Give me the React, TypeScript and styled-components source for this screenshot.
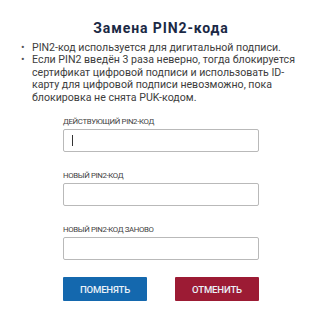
import React from "react";
import styled, { createGlobalStyle } from "styled-components";

const Global = createGlobalStyle`
  html, body { margin: 0; padding: 0; background: #ffffff; }
  body { font-family: Roboto, "Liberation Sans", Arial, sans-serif; }
`;

const Page = styled.div`
  width: 322px;
  height: 320px;
  box-sizing: border-box;
  padding-top: 20px;
  display: flex;
  flex-direction: column;
`;

const Title = styled.h1`
  margin: 0;
  text-align: center;
  font-family: Roboto, "Liberation Sans", sans-serif;
  font-weight: 700;
  font-size: 14px;
  line-height: 16px;
  letter-spacing: 0.9px;
  color: #1b2945;
`;

const List = styled.ul`
  margin: 6px 0 0 0;
  padding: 0 20px 0 32px;
  list-style: none;
`;

const Item = styled.li`
  position: relative;
  font-size: 10.6px;
  line-height: 12.4px;
  color: #3d3d3d;
  &::before {
    content: "•";
    position: absolute;
    left: -11px;
    top: 0;
    color: #555;
  }
`;

const Form = styled.div`
  margin: 13px 0 0 63px;
  width: 196px;
  display: flex;
  flex-direction: column;
  gap: 19px;
`;

const Field = styled.div`
  display: flex;
  flex-direction: column;
  gap: 3px;
`;

const Label = styled.div`
  font-size: 7.8px;
  line-height: 9px;
  letter-spacing: -0.35px;
  text-transform: uppercase;
  color: #3f3f3f;
`;

const Box = styled.div`
  height: 23px;
  box-sizing: border-box;
  border: 1px solid #b9b9b9;
  border-radius: 2px;
  display: flex;
  align-items: center;
  padding-left: 8px;
`;

const Caret = styled.span`
  width: 1px;
  height: 11px;
  background: #333;
`;

const Buttons = styled.div`
  display: flex;
  justify-content: space-between;
  margin-top: -2px;
`;

const Button = styled.button<{ $tone: "blue" | "red" }>`
  width: 84px;
  height: 24px;
  border: none;
  border-radius: 1px;
  padding: 0;
  font-family: Roboto, "Liberation Sans", sans-serif;
  font-size: 9.6px;
  font-weight: 500;
  letter-spacing: -0.2px;
  color: #eaf1f8;
  background: ${(p) => (p.$tone === "blue" ? "#1468ae" : "#9c1b34")};
`;

export default function App() {
  return (
    <>
      <Global />
      <Page>
        <Title>Замена PIN2-кода</Title>
        <List>
          <Item>PIN2-код используется для дигитальной подписи.</Item>
          <Item>
            Если PIN2 введён 3 раза неверно, тогда блокируется сертификат
            цифровой подписи и использовать ID-карту для цифровой подписи
            невозможно, пока блокировка не снята PUK-кодом.
          </Item>
        </List>
        <Form>
          <Field>
            <Label>Действующий PIN2-код</Label>
            <Box>
              <Caret />
            </Box>
          </Field>
          <Field>
            <Label>Новый PIN2-код</Label>
            <Box />
          </Field>
          <Field>
            <Label>Новый PIN2-код заново</Label>
            <Box />
          </Field>
          <Buttons>
            <Button $tone="blue">ПОМЕНЯТЬ</Button>
            <Button $tone="red">ОТМЕНИТЬ</Button>
          </Buttons>
        </Form>
      </Page>
    </>
  );
}
